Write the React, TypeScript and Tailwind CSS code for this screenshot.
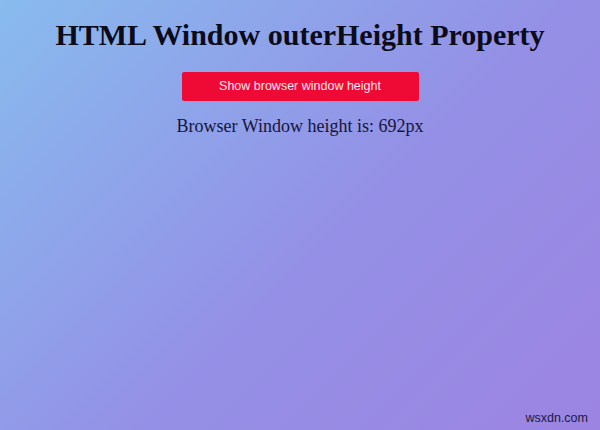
import React from "react";

export default function App() {
  return (
    <div className="relative w-[600px] h-[430px] overflow-hidden bg-[linear-gradient(135deg,#88bbee_0%,#9490e6_55%,#9c84e2_100%)]">
      <div className="flex flex-col items-center pt-[16px]">
        <h1 className="text-[30px] leading-[38px] font-bold text-[#0b0b1a] [font-family:'Liberation_Serif',serif]">
          HTML Window outerHeight Property
        </h1>
        <button className="mt-[18px] w-[237px] h-[29px] bg-[#ee0a35] rounded-[2px] text-[#fbe6ee] text-[12.5px] [font-family:'Liberation_Sans',Arial,sans-serif]">
          Show browser window height
        </button>
        <p className="mt-[14px] text-[18px] leading-[22px] text-[#15153a] [font-family:'Liberation_Serif',serif]">
          Browser Window height is: 692px
        </p>
      </div>
      <div className="absolute right-[12px] bottom-[4px] text-[12.5px] leading-[15px] text-[#1a1a40] [font-family:'Liberation_Sans',Arial,sans-serif]">
        wsxdn.com
      </div>
    </div>
  );
}
